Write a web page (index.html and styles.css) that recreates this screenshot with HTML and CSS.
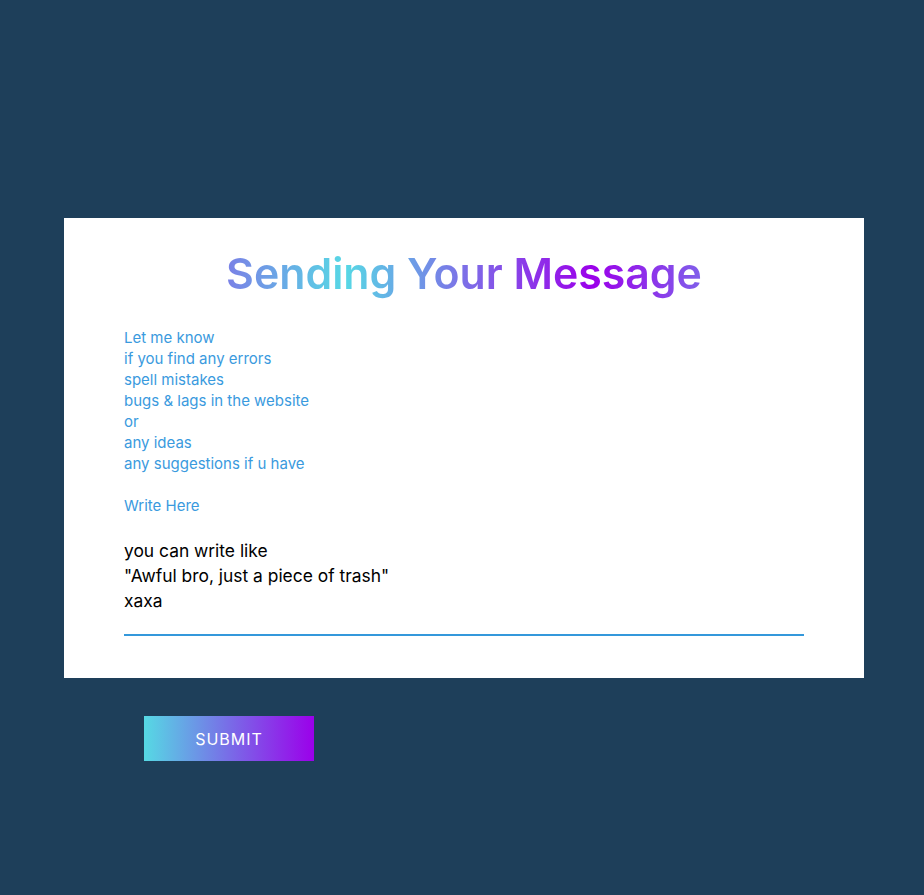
FILE: index.html
```html
<!DOCTYPE html>
<html lang="en">
<head>
<meta charset="utf-8">
<title>Sending Your Message</title>
<link rel="stylesheet" href="styles.css">
</head>
<body>
<main class="page">
  <form class="card">
    <h1 class="title">Sending Your Message</h1>
    <p class="intro">Let me know<br>if you find any errors<br>spell mistakes<br>bugs &amp; lags in the website<br>or<br>any ideas<br>any suggestions if u have</p>
    <label class="label" for="msg">Write Here</label>
    <textarea id="msg" class="message" rows="3">you can write like
"Awful bro, just a piece of trash"
xaxa</textarea>
  </form>
  <button class="submit" type="button">SUBMIT</button>
</main>
</body>
</html>
```

FILE: styles.css
```css
html, body {
  margin: 0;
  padding: 0;
  background: #1e3f5a;
}

body {
  font-family: "Inter", "Open Sans", sans-serif;
  min-height: 895px;
}

.page {
  padding: 218px 0 0 64px;
  display: flex;
  flex-direction: column;
  align-items: flex-start;
}

.card {
  width: 800px;
  height: 460px;
  box-sizing: border-box;
  background: #ffffff;
  padding: 30px 60px 0 60px;
  display: flex;
  flex-direction: column;
}

.title {
  margin: 0;
  text-align: center;
  font-size: 42.8px;
  font-weight: 600;
  line-height: 52px;
  align-self: center;
  background: linear-gradient(90deg, #7a80e6 0%, #57d8e5 25%, #7a78e7 48%, #9b00ea 77%, #8060ea 100%);
  -webkit-background-clip: text;
  background-clip: text;
  color: transparent;
}

.intro {
  margin: 27px 0 0 0;
  font-size: 15px;
  line-height: 21px;
  color: #3a9ade;
}

.label {
  display: block;
  margin-top: 21px;
  font-size: 15px;
  line-height: 21px;
  color: #3a9ade;
}

.message {
  margin-top: 22px;
  width: 680px;
  height: 98px;
  box-sizing: border-box;
  padding: 0 0 8px 0;
  border: none;
  border-bottom: 2px solid #3498db;
  outline: none;
  resize: none;
  overflow: hidden;
  font-family: inherit;
  font-size: 17.4px;
  line-height: 25px;
  color: #000;
  background: transparent;
}

.submit {
  margin: 38px 0 0 80px;
  width: 170px;
  height: 45px;
  border: none;
  padding: 0;
  background: linear-gradient(90deg, #56d9e4 0%, #9b00ea 100%);
  color: #ffffff;
  font-family: inherit;
  font-size: 16px;
  letter-spacing: 1px;
}
```
